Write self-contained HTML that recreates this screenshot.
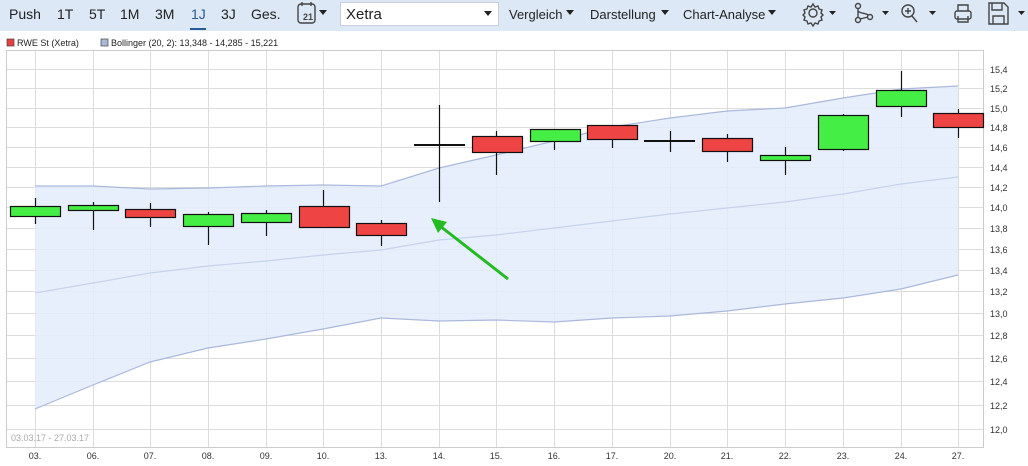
<!DOCTYPE html>
<html><head><meta charset="utf-8"><style>
body{margin:0;width:1028px;height:466px;background:#fff;font-family:"Liberation Sans",sans-serif;overflow:hidden;position:relative}
.tb{position:absolute;left:0;top:0;width:1028px;height:31px;background:#dde8f6}
.t{position:absolute;top:6px;font-size:14px;color:#222}
.s{font-size:13px;top:7px}
svg{position:absolute;left:0;top:0}
</style></head><body>
<div class="tb"></div>
<span class="t" style="left:9px">Push</span>
<span class="t" style="left:57px">1T</span>
<span class="t" style="left:89px">5T</span>
<span class="t" style="left:120px">1M</span>
<span class="t" style="left:155px">3M</span>
<span class="t" style="left:191px;color:#2b5a9a">1J</span>
<div style="position:absolute;left:190px;top:28px;width:16px;height:2px;background:#2b5a9a"></div>
<span class="t" style="left:221px">3J</span>
<span class="t" style="left:251px">Ges.</span>
<div style="position:absolute;left:340px;top:2px;width:157px;height:22px;background:#fff;border:1px solid #ccd"></div>
<span class="t" style="left:346px;font-size:15px">Xetra</span>
<span class="t s" style="left:509px">Vergleich</span>
<span class="t s" style="left:590px">Darstellung</span>
<span class="t s" style="left:683px">Chart-Analyse</span>
<svg width="1028" height="466" viewBox="0 0 1028 466">
<g fill="#222">
<path d="M484 11h8l-4 5z"/><path d="M566 10h8l-4 5z"/><path d="M661 10h8l-4 5z"/><path d="M768 10h8l-4 5z"/>
<path d="M319 10h8l-4 5z"/><path d="M829 11h7l-3.5 4z"/><path d="M882 11h7l-3.5 4z"/><path d="M929 11h7l-3.5 4z"/><path d="M1018 11h7l-3.5 4z"/>
</g>
<g fill="none" stroke="#444" stroke-width="1.4">
<rect x="298" y="4" width="17" height="19" rx="3"/><path d="M302 2v4M311 2v4"/>
<circle cx="813" cy="13" r="4"/><path d="M813 4l2 3 3-1 1 3 3 1-1 3 2 2-2 2 1 3-3 1-1 3-3-1-2 3-2-3-3 1-1-3-3-1 1-3-2-2 2-2-1-3 3-1 1-3 3 1z"/>
<circle cx="858" cy="6" r="2.5"/><circle cx="870" cy="17" r="2.5"/><circle cx="858" cy="20" r="2.5"/><path d="M858 9v8M860 19l8-2M858 11c3 3 8 2 10 4"/>
<circle cx="908" cy="11" r="6"/><path d="M912 16l5 6M905 11h6M908 8v6"/>
<rect x="955" y="11" width="16" height="8" rx="2"/><path d="M958 11V5h10v6M958 16v6h10v-6"/>
<path d="M989 3h15l4 4v17h-19z"/><path d="M992 3v7h10V3M993 24v-8h11v8"/>
</g>
<text x="303" y="20" font-size="9" font-weight="bold" fill="#444" font-family="Liberation Sans">21</text>
<rect x="7" y="39" width="7" height="7" fill="#e84040" stroke="#444" stroke-width=".7"/>
<text x="17" y="46" font-size="9" fill="#222">RWE St (Xetra)</text>
<rect x="101" y="39" width="7" height="7" fill="#a9b9d9" stroke="#444" stroke-width=".7"/>
<text x="111" y="46" font-size="9" fill="#222">Bollinger (20, 2): 13,348 - 14,285 - 15,221</text>
<rect x="6.5" y="50.5" width="977" height="397" fill="#fff" stroke="#ccc"/>
<g stroke="#dcdcdc" stroke-width="1">
<path d="M7 69.5h976M7 88.5h976M7 108.5h976M7 127.5h976M7 147.5h976M7 167.5h976M7 187.5h976M7 207.5h976M7 228.5h976M7 249.5h976M7 270.5h976M7 291.5h976M7 313.5h976M7 335.5h976M7 358.5h976M7 381.5h976M7 405.5h976M7 429.5h976"/>
<path d="M35.5 51v396M93.5 51v396M150.5 51v396M208.5 51v396M266.5 51v396M323.5 51v396M381.5 51v396M439.5 51v396M496.5 51v396M554.5 51v396M612.5 51v396M670.5 51v396M727.5 51v396M785.5 51v396M843.5 51v396M901.5 51v396M958.5 51v396"/>
</g>
<path d="M35 186L93 186L150 189L208 188L266 186L323 185L381 186L439 168L496 155L554 141L612 127L670 118L727 111L785 108L843 98L901 89L958 86L958 275L901 289L843 298L785 304L727 311L670 316L612 318L554 322L496 320L439 321L381 318L323 329L266 339L208 348L150 362L93 385L35 409Z" fill="#e4ecfb" fill-opacity=".85"/>
<g fill="none" stroke="#a9b9dc" stroke-width="1.2">
<path d="M35 186L93 186L150 189L208 188L266 186L323 185L381 186L439 168L496 155L554 141L612 127L670 118L727 111L785 108L843 98L901 89L958 86"/>
<path d="M35 409L93 385L150 362L208 348L266 339L323 329L381 318L439 321L496 320L554 322L612 318L670 316L727 311L785 304L843 298L901 289L958 275"/>
<path stroke="#c5d3ee" d="M35 293L93 283L150 273L208 266L266 261L323 255L381 250L439 240L496 235L554 228L612 221L670 214L727 208L785 202L843 194L901 184L958 177"/>
</g>
<g stroke="#111" stroke-width="1.2">
<path d="M35.5 198v26M93.5 202v28M150.5 203v24M208.5 212v33M266.5 210v26M323.5 190v16M381.5 220v26M439.5 105v97M496.5 131v44M554.5 129v21M612.5 125v23M670.5 131v21M727.5 134v28M785.5 147v28M843.5 114v37M901.5 71v46M958.5 109v29"/>
<path d="M414 145h51M644 141h51" stroke-width="2"/>
</g>
<g stroke="#111" stroke-width="1.2">
<rect x="10.5" y="206.5" width="50" height="10" fill="#44ee44"/>
<rect x="68.5" y="205.5" width="50" height="5" fill="#44ee44"/>
<rect x="125.5" y="209.5" width="50" height="8" fill="#ee4444"/>
<rect x="183.5" y="214.5" width="50" height="12" fill="#44ee44"/>
<rect x="241.5" y="213.5" width="50" height="9" fill="#44ee44"/>
<rect x="299.5" y="206.5" width="50" height="21" fill="#ee4444"/>
<rect x="356.5" y="223.5" width="50" height="12" fill="#ee4444"/>
<rect x="472.5" y="136.5" width="50" height="16" fill="#ee4444"/>
<rect x="530.5" y="129.5" width="50" height="12" fill="#44ee44"/>
<rect x="587.5" y="125.5" width="50" height="14" fill="#ee4444"/>
<rect x="702.5" y="138.5" width="50" height="13" fill="#ee4444"/>
<rect x="760.5" y="155.5" width="50" height="5" fill="#44ee44"/>
<rect x="818.5" y="115.5" width="50" height="34" fill="#44ee44"/>
<rect x="876.5" y="90.5" width="50" height="16" fill="#44ee44"/>
<rect x="933.5" y="113.5" width="50" height="14" fill="#ee4444"/>
</g>
<path d="M508 279L440 226" stroke="#22bb22" stroke-width="3"/>
<path d="M431 218L447 222L438 233Z" fill="#22bb22"/>
<g font-size="9" fill="#333">
<text x="990" y="73">15,4</text><text x="990" y="92">15,2</text><text x="990" y="112">15,0</text><text x="990" y="131">14,8</text><text x="990" y="151">14,6</text><text x="990" y="171">14,4</text><text x="990" y="191">14,2</text><text x="990" y="211">14,0</text><text x="990" y="232">13,8</text><text x="990" y="253">13,6</text><text x="990" y="274">13,4</text><text x="990" y="295">13,2</text><text x="990" y="317">13,0</text><text x="990" y="339">12,8</text><text x="990" y="362">12,6</text><text x="990" y="385">12,4</text><text x="990" y="409">12,2</text><text x="990" y="433">12,0</text>
</g>
<text x="11" y="441" font-size="9" fill="#aaa">03.03.17 - 27.03.17</text>
<g font-size="9" fill="#333" text-anchor="middle">
<text x="35" y="459">03.</text><text x="93" y="459">06.</text><text x="150" y="459">07.</text><text x="208" y="459">08.</text><text x="266" y="459">09.</text><text x="323" y="459">10.</text><text x="381" y="459">13.</text><text x="439" y="459">14.</text><text x="496" y="459">15.</text><text x="554" y="459">16.</text><text x="612" y="459">17.</text><text x="670" y="459">20.</text><text x="727" y="459">21.</text><text x="785" y="459">22.</text><text x="843" y="459">23.</text><text x="901" y="459">24.</text><text x="958" y="459">27.</text>
</g>
</svg>
</body></html>
